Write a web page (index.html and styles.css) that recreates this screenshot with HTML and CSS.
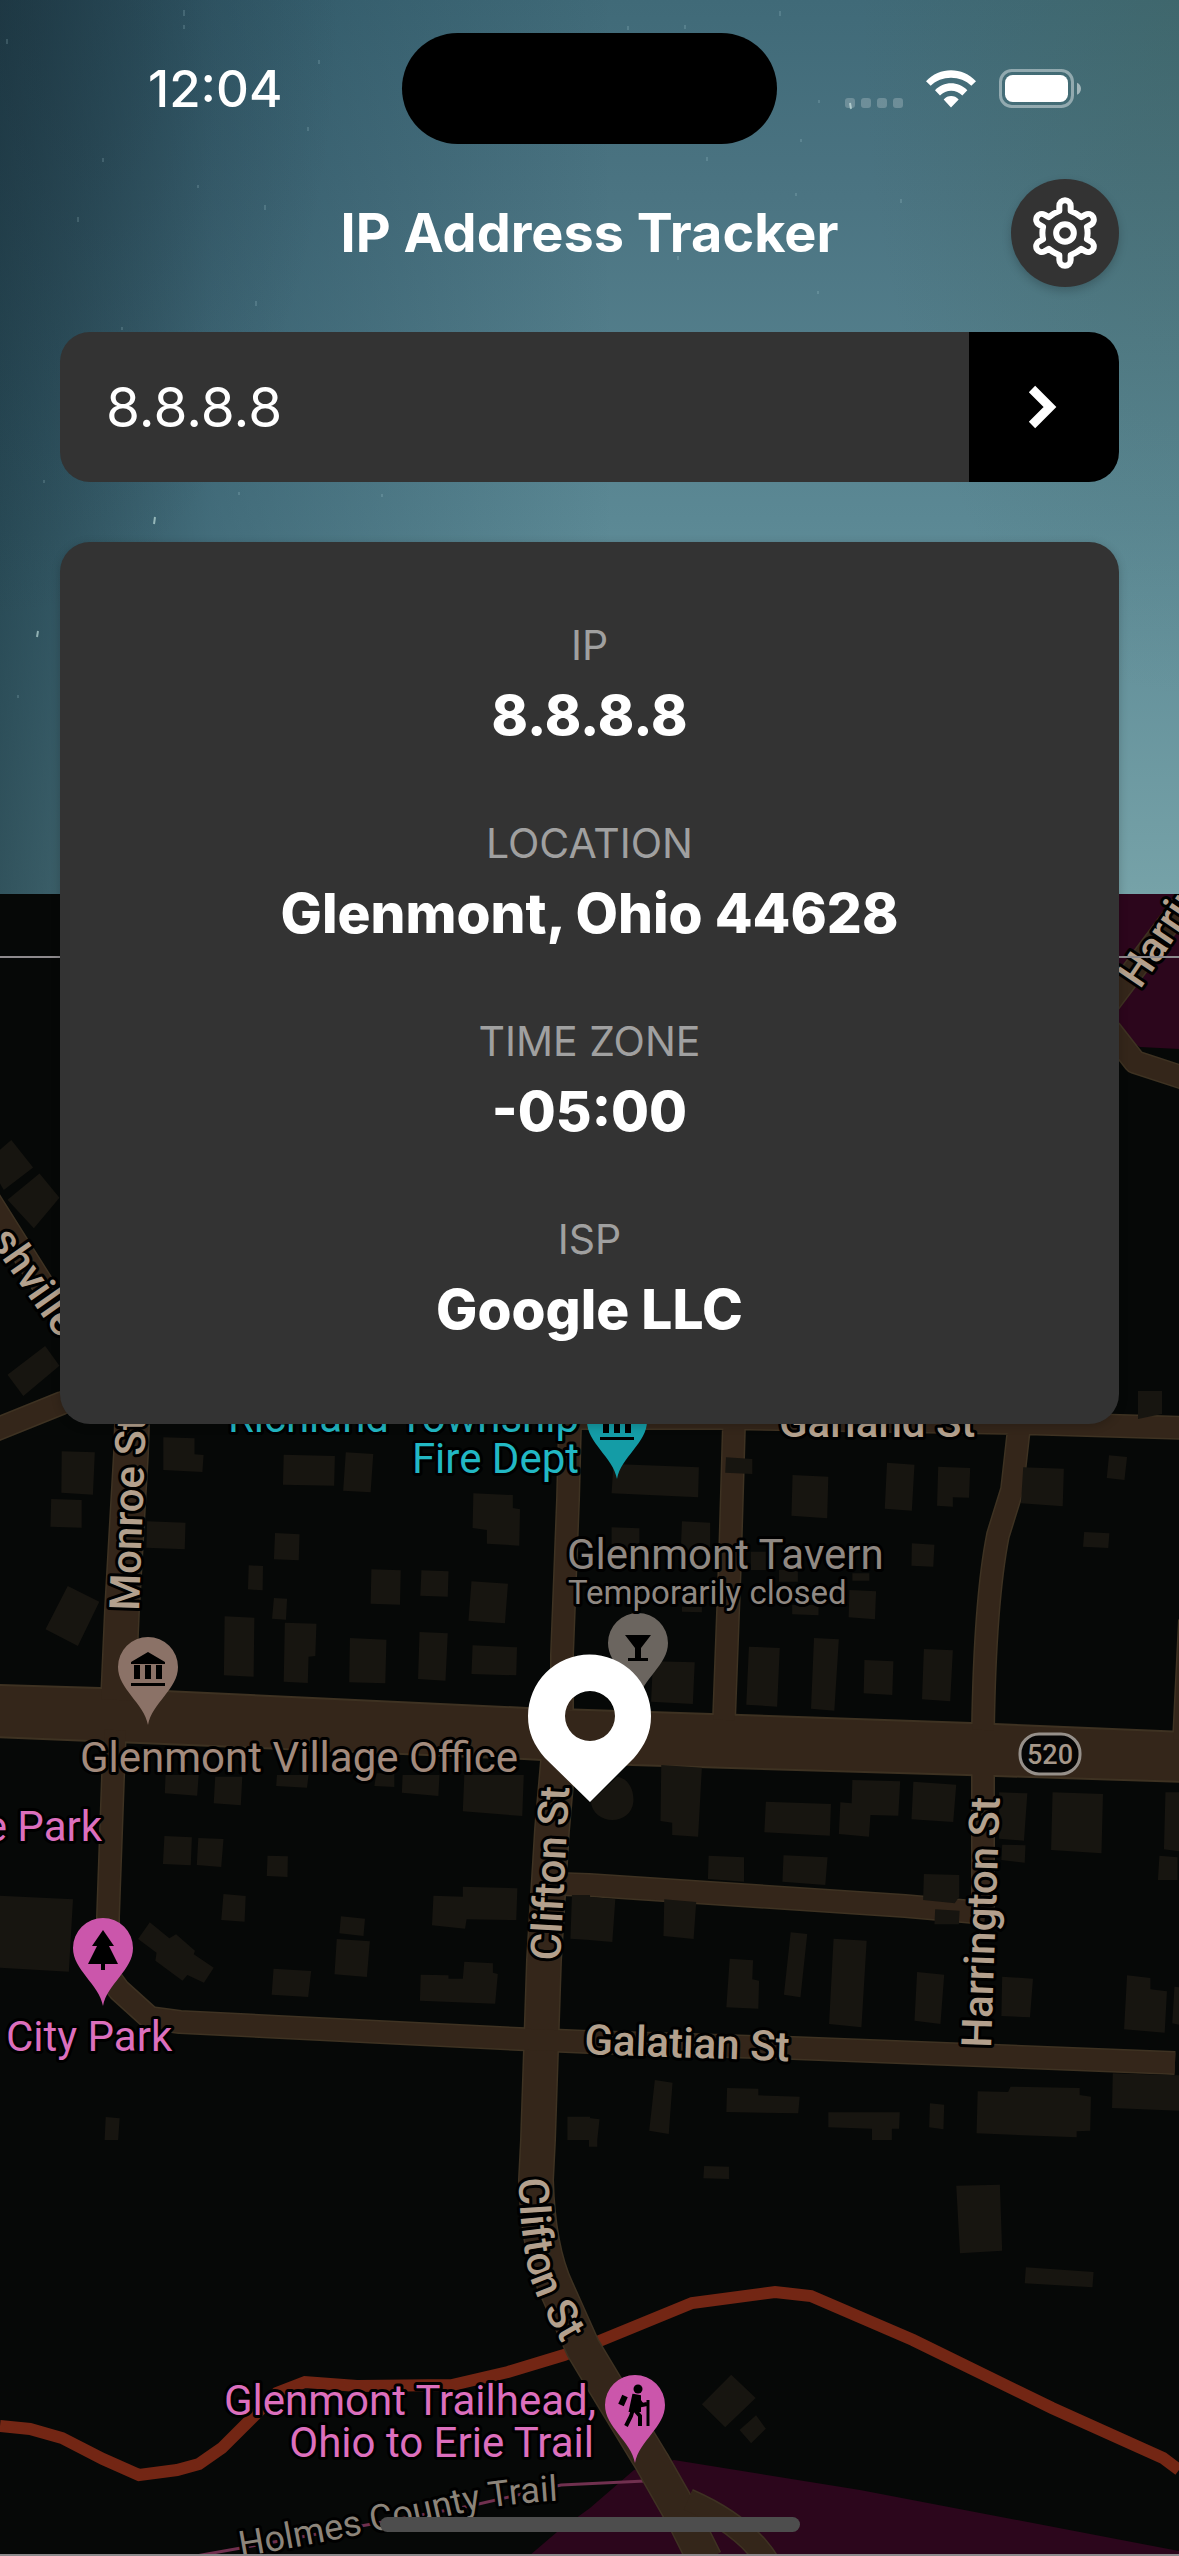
FILE: index.html
```html
<!DOCTYPE html>
<html lang="en">
<head>
<meta charset="utf-8">
<meta name="viewport" content="width=device-width">
<title>IP Address Tracker</title>
<link rel="stylesheet" href="styles.css">
</head>
<body>
<div class="app">
  <header class="sky">
    <svg class="stars" viewBox="0 0 1179 894" preserveAspectRatio="xMidYMin slice" aria-hidden="true">
      <path d="M184 10v6M184 25v4M780 11v5M628 26v4M685 25v4M7 39v5M319 60v4M308 127v4M103 158v4M707 157v4M265 205v5M78 217v5M256 301v5M678 256v4M801 139v3M901 199v4M818 291v3M122 327v3M819 100v3M44 480v3M239 492v3M18 695v3M382 494v3M198 185v3M796 193v3"/>
      <path class="bright" d="M155 517l-1 7M38 631l-1 6M850 103l1 6"/>
    </svg>
    <div class="status">
      <time class="clock">12:04</time>
      <div class="island"></div>
      <div class="indicators">
        <svg width="58" height="10" viewBox="0 0 58 10" class="dots"><rect width="10" height="10" rx="3"/><rect x="16" width="10" height="10" rx="3"/><rect x="32" width="10" height="10" rx="3"/><rect x="48" width="10" height="10" rx="3"/></svg>
        <svg width="50" height="38" viewBox="0 0 150 113" fill="#fff"><path d="M0 33C40-11 110-11 150 33L136 47C105 15 45 15 14 47ZM27 60C53 32 97 32 124 60L109 76C91 57 60 57 42 76ZM53 88C65 74 86 74 98 88L75 112Z"/></svg>
        <svg width="82" height="39" viewBox="0 0 246 117"><rect x="4.5" y="4.5" width="216" height="108" rx="34" fill="none" stroke="#fff" stroke-opacity=".42" stroke-width="9"/><rect x="18" y="18" width="189" height="81" rx="23" fill="#fff"/><path d="M234 41c16 6 16 30 0 36z" fill="#fff" fill-opacity=".5"/></svg>
      </div>
    </div>
    <div class="titlebar">
      <h1>IP Address Tracker</h1>
      <button class="settings" type="button" aria-label="Settings">
        <svg width="72" height="72" viewBox="-108 -108 216 216" fill="none" stroke="#fff" stroke-width="18" stroke-linejoin="round"><path d="M-17-66V-81A17 17 0 0 1 17-81V-66Q34-60 48.7-47.7L61.6-55.2A17 17 0 0 1 78.6-25.8L65.7-18.3Q70 0 65.7 18.3L78.6 25.8A17 17 0 0 1 61.6 55.2L48.7 47.7Q34 60 17 66V81A17 17 0 0 1-17 81V66Q-34 60-48.7 47.7L-61.6 55.2A17 17 0 0 1-78.6 25.8L-65.7 18.3Q-70 0-65.7-18.3L-78.6-25.8A17 17 0 0 1-61.6-55.2L-48.7-47.7Q-34-60-17-66Z"/><circle r="26.500"/></svg>
      </button>
    </div>
    <form class="search">
      <input type="text" value="8.8.8.8" aria-label="IP address">
      <button type="button" aria-label="Search"><svg width="36" height="48" viewBox="0 0 36 48" fill="none" stroke="#fff" stroke-width="9"><path d="M6 6L24 24L6 42"/></svg></button>
    </form>
    <dl class="card">
      <div><dt>IP</dt><dd>8.8.8.8</dd></div>
      <div><dt>LOCATION</dt><dd>Glenmont, Ohio 44628</dd></div>
      <div><dt>TIME ZONE</dt><dd>-05:00</dd></div>
      <div><dt>ISP</dt><dd>Google LLC</dd></div>
    </dl>
  </header>
  <main class="map">
    <svg viewBox="0 894 1179 1662" role="img" aria-label="Map of Glenmont, Ohio">
      <defs>
        <path id="pin" d="M0 0C-4-22-30-36-30-58A30 30 0 0 1 30-58C30-36 4-22 0 0Z"/>
        <path id="hall" d="M-17-63L0-73L17-63V-61H-17ZM-14-60H-8V-46H-14ZM-3-60H3V-46H-3ZM8-60H14V-46H8ZM-17-42H17V-39H-17Z"/>
        <path id="bend" d="M519 2178Q519 2230 530 2277Q540 2310 580 2372"/>
        <path id="trail" d="M241 2557Q360 2536 470 2511Q510 2503 570 2500"/>
      </defs>
      <rect y="894" width="1179" height="1662" fill="#060807"/>
      <g class="park">
        <path d="M1110 894H1179V1049L1140 1047L1110 1028Z"/>
        <path d="M529 2556L557 2532L590 2508L634 2470L674 2460L860 2490L1179 2551V2556Z"/>
      </g>
      <path d="M196 2556L241 2548L470 2506L561 2485L645 2481" fill="none" stroke="#70304f" stroke-width="3"/>
      <path d="M0 2426L30 2429L62 2438L103 2459L139 2475L177 2470L199 2464L222 2448L248 2422L277 2393L305 2382L357 2386L452 2385L508 2372L564 2355L597 2342L692 2303L775 2292L811 2296L913 2340L1052 2408L1163 2458L1179 2470" fill="none" stroke="#732614" stroke-width="12"/>
      <g class="road-edge">
        <path id="wide" d="M132 1424L131 1453L122 1610L118 1700M559 1750L552 1830L544 1960L538 2140L536 2180Q538 2250 557 2290L583 2348L604 2383L652 2462L685 2520L705 2560"/>
      </g>
      <g class="street-edge">
        <path id="narrow" d="M-20 1185L60 1312M-20 1436L62 1403L130 1380M115 1730L113 1777L108 1917V1975L119 1990L150 2018L180 2022L519 2039L589 2042L793 2048L1175 2063M570 1418H720L1019 1423L1190 1428M570 1424L568 1500L562 1655V1710M734 1424L730 1560L724 1720M1019 1428L1012 1490L998 1535Q985 1600 983 1730M983 1770V1915M560 1884L589 1885L905 1906L985 1913M1100 1015L1190 895M1110 1030L1135 1062L1190 1080M1190 1620L1184 1740M688 2500Q745 2525 768 2562"/>
      </g>
      <path class="main-road" d="M-4 1685L100 1688L527 1708L711 1714L971 1723L1183 1732V1782L967 1775L632 1765L524 1759L-4 1737Z"/>
      <use href="#wide" class="road"/><use href="#narrow" class="street"/>
      <g class="buildings">
        <svg y="880" width="590" height="560" viewBox="0 0 1568 1568" preserveAspectRatio="none"><path d="M30 728L88 805L10 868L0 850V755ZM105 822L158 890L90 975L20 895ZM120 1305L158 1360L62 1445L20 1385Z"/></svg>
        <path d="M1138 1391H1162V1414L1138 1419Z"/>
        <svg y="1400" width="590" height="400" viewBox="0 0 1568 1200" preserveAspectRatio="none"><path d="M164 154L252 157L247 284L163 278ZM136 297L217 300V383L134 380ZM434 112L517 115V163L541 165L538 216L434 210ZM754 164L890 168L888 257L752 254ZM919 157L992 162L985 277L912 272ZM391 364L493 368L491 448L389 443ZM731 399L796 403L794 481L728 478ZM661 496L699 498L698 571L659 568ZM728 594L763 596L760 659L723 656ZM597 649L676 653L674 830L595 826ZM757 668L841 671L838 768L820 770L818 849L754 845ZM930 714L1027 719L1024 850L928 847ZM987 508L1065 511L1063 614L985 611ZM1120 511L1192 514L1190 590L1117 587ZM1258 280L1363 285V324L1382 328L1380 437L1294 431V390L1256 384ZM1253 544L1350 551L1342 670L1245 662ZM1115 696L1190 700L1184 842L1111 837ZM1256 736L1374 742L1372 826L1253 822ZM180 558L264 605L207 738L121 688Z"/></svg>
        <svg x="589" y="1400" width="590" height="400" viewBox="0 0 1568 1200" preserveAspectRatio="none"><path d="M65 192L292 202L290 292L60 280ZM364 172L434 177V222L362 218ZM541 225L636 230L633 355L538 347ZM792 188L865 194L858 332L786 326ZM928 200L1013 204L1010 293L967 292V320L925 317ZM1154 202L1262 206L1259 319L1148 310ZM1382 166L1430 171L1423 240L1376 234ZM1316 396L1383 400L1380 444L1313 440ZM858 430L918 434L915 500L857 497ZM60 382L134 385V450H60ZM247 364L322 368V450H244ZM505 510H555V545H505ZM700 520H745V542H700ZM540 615H610V646L540 643ZM692 570L763 574L760 658L690 652ZM425 740L507 744L500 920L418 914ZM598 714L664 718L652 932L590 926ZM732 780L809 784L806 885L730 880ZM890 747L967 751L960 904L885 898ZM170 784L281 787L276 912L165 905ZM430 455H470V510H430ZM247 620H300V637L247 635Z"/></svg>
        <svg y="1740" width="590" height="400" viewBox="0 0 1568 1200" preserveAspectRatio="none"><path d="M440 105H528L524 167L438 160ZM572 110H644L640 196L568 190ZM736 105H820L816 143L734 138ZM1000 100H1048V141L995 138ZM1070 105H1168L1165 168L1068 158ZM1234 105H1392L1388 228L1230 214ZM437 288L510 292L507 376L433 372ZM527 294L594 297L588 381L523 375ZM711 347L765 349L764 411L709 408ZM594 462L653 468L650 545L588 540ZM0 467L194 478L183 695L0 683ZM398 547L450 595L468 583L518 632L515 643L568 683L542 728L498 705L485 722L413 662L416 638L367 597ZM906 529L970 536L966 588L902 580ZM895 597L983 604L975 711L889 703ZM727 686L827 693L819 771L722 764ZM1152 467L1230 470V440L1375 445L1372 540L1240 538L1236 566L1148 556ZM1118 704L1192 706V716H1230L1234 665L1310 670V698L1323 702L1316 791L1116 782ZM1520 465H1568V600L1516 596ZM281 1131L318 1135L314 1200H278ZM1508 1130H1568V1200H1508Z"/></svg>
        <svg x="589" y="1740" width="590" height="400" viewBox="0 0 1568 1200" preserveAspectRatio="none"><path d="M75 110C105 115 120 150 118 185C115 220 90 240 62 240C35 240 8 220 5 185ZM192 75L300 83L290 290L221 285V248L190 243ZM470 185L643 192L640 287L466 277ZM668 187L698 190L700 120L827 124L822 227L748 225L744 290L664 282ZM862 125L976 134L968 246L857 238ZM1090 157L1165 160L1156 302L1090 296ZM1232 157L1366 162L1362 340L1228 330ZM1098 314L1160 316L1158 368L1096 360ZM1532 157H1568V334L1528 328ZM1516 347L1564 352V420H1512ZM318 347L412 352V425L316 417ZM517 346L634 352L628 435L514 425ZM0 470L70 478L62 606L0 600ZM200 478L285 486L278 597L198 588ZM890 402L984 405V470L972 490L888 480ZM920 508L985 512L983 553H918ZM536 577L580 582L562 772L518 764ZM650 596L738 602L724 862L638 852ZM374 656L436 661L434 718L452 722L450 806L365 802ZM872 696L944 704L934 852L865 842ZM1098 710L1180 716L1172 832L1096 828ZM1430 706L1492 714V748L1536 754L1530 878L1422 868ZM1556 740L1568 742V854L1550 850ZM175 1020L222 1028L212 1182L160 1172ZM367 1044L450 1046V1066L560 1070L556 1120L365 1116ZM636 1117H826L824 1166H805V1200H752V1166L636 1162ZM906 1090L944 1094L942 1168L904 1162ZM1033 1054L1114 1056L1120 1040L1304 1044V1065L1334 1070L1332 1172L1296 1174V1192L1030 1180ZM1392 1000L1568 1006V1112L1390 1104ZM0 1134L28 1138L22 1200H0Z"/></svg>
        <svg x="589" y="2140" width="590" height="416" viewBox="0 0 1568 1248" preserveAspectRatio="none"><path d="M0 0H22V20H0ZM306 78L372 80V117L304 115ZM976 137L1092 134L1098 332L986 340ZM1161 382L1341 396L1338 442L1158 430ZM378 704L443 774L362 862L300 793ZM444 826L470 866L431 910L400 870Z"/></svg>
      </g>

      <use href="#pin" x="148" y="1725" fill="#8b7267"/><use href="#hall" x="148" y="1725"/>
      <use href="#pin" x="617" y="1479" fill="#149ca6"/><use href="#hall" x="617" y="1479"/>
      <use href="#pin" x="638" y="1701" fill="#6b655f"/>
      <path d="M625 1635H651L641 1648V1658H648V1661H628V1658H635V1648Z"/>
      <use href="#pin" x="103" y="2006" fill="#cb56ab"/>
      <path d="M103 1930L114 1946H109L118 1964H105V1970H101V1964H88L97 1946H92Z"/>
      <use href="#pin" x="635" y="2463" fill="#cb56ab"/>
      <g fill="none" stroke="#000" stroke-width="4"><circle cx="638" cy="2389" r="4.500" fill="#000" stroke="none"/><path d="M635 2396L634 2409L640 2416V2426M633 2409L631 2416L626 2426M638 2399L642 2405L647 2404"/><path d="M634 2396L639 2397L639 2410H631Z" fill="#000"/><path d="M648 2400V2426" stroke-width="3"/><path d="M625 2396L621 2405" stroke-width="6"/></g>

      <g class="labels">
        <text class="street-name" transform="translate(-11 1240) rotate(55)">shville</text>
        <text class="street-name" transform="translate(1140 990) rotate(-56)">Harrington</text>
        <text class="street-name" transform="translate(139 1611) rotate(-88)">Monroe St</text>
        <text class="street-name" transform="translate(560 1961) rotate(-87)">Clifton St</text>
        <text class="street-name" transform="translate(991 2048) rotate(-88)">Harrington St</text>
        <text class="street-name" transform="translate(584 2054) rotate(2)">Galatian St</text>
        <text class="street-name" x="779" y="1437">Garland St</text>
        <text class="street-name"><textPath href="#bend">Clifton St</textPath></text>
        <text class="trail-name"><textPath href="#trail">Holmes County Trail</textPath></text>
        <text class="teal end" x="579" y="1432">Richland Township</text>
        <text class="teal end" x="579" y="1473">Fire Dept</text>
        <text class="grey" x="567" y="1569">Glenmont Tavern</text>
        <text class="grey small" x="568" y="1604">Temporarily closed</text>
        <text class="office" x="80" y="1772">Glenmont Village Office</text>
        <text class="pink end" x="102" y="1841">e Park</text>
        <text class="pink" x="6" y="2051">City Park</text>
        <text class="pink end" x="596" y="2415">Glenmont Trailhead,</text>
        <text class="pink end" x="594" y="2457">Ohio to Erie Trail</text>
      </g>
      <rect x="1020" y="1734" width="60" height="40" rx="19" fill="#050505" stroke="#96908a" stroke-width="3"/>
      <text class="shield" x="1050" y="1764">520</text>
      <path d="M0 957H1179M0 2555H1179" stroke="#8d8a8d" stroke-width="2"/>
      <path fill="#fff" fill-rule="evenodd" d="M590 1802L545 1758C534 1745 528 1733 528 1716A61 61 0 0 1 651 1716C651 1733 645 1745 634 1758ZM590 1691A25 25 0 0 0 590 1741A25 25 0 0 0 590 1691Z"/>
    </svg>
    <div class="home-bar"></div>
  </main>
</div>
</body>
</html>
```
FILE: styles.css
```css
* { box-sizing: border-box; }
body { margin: 0; background: #060807; color: #fff; font-family: Inter, "Liberation Sans", sans-serif; }
button { border: 0; padding: 0; color: inherit; cursor: pointer; display: grid; place-items: center; }
svg { display: block; }

.app { display: flex; flex-direction: column; min-height: 100vh; }

.sky {
  position: relative;
  z-index: 1;
  margin-bottom: -530px;
}
.sky::before {
  content: "";
  position: absolute;
  inset: 0 0 530px;
  z-index: -2;
  background:
    radial-gradient(ellipse 340px 620px at 0 0, rgba(28, 44, 54, .4), rgba(28, 44, 54, 0)),
    linear-gradient(90deg, rgba(14, 42, 54, .66), rgba(22, 58, 76, .36) 18%, rgba(30, 70, 90, 0) 52%),
    radial-gradient(ellipse 320px 700px at 100% 0, rgba(60, 95, 80, .28), rgba(60, 95, 80, 0)),
    linear-gradient(#406a78, #4b7482 22%, #5b8894 58%, #76a2a8);
}
.stars {
  position: absolute;
  inset: 0 0 530px;
  width: 100%;
  height: calc(100% - 530px);
  z-index: -1;
  fill: none;
  stroke: rgba(190, 225, 230, .35);
  stroke-width: 1;
}
.stars .bright { stroke: rgba(210, 240, 235, .6); stroke-width: 2; }

.status {
  display: grid;
  grid-template-columns: 1fr 375px 1fr;
  align-items: center;
  padding: 33px 98px 35px 98px;
}
.clock { padding-left: 50px; font-size: 51px; line-height: 60px; font-weight: 500; }
.island { height: 111px; border-radius: 56px; background: #000; }
.indicators { display: flex; justify-content: flex-end; align-items: center; gap: 23px; }
.dots { fill: rgba(255, 255, 255, .22); align-self: flex-end; }

.titlebar {
  display: grid;
  grid-template-columns: 108px 1fr 108px;
  align-items: center;
  padding: 0 60px;
}
h1 { grid-column: 2; margin: 0; text-align: center; font-size: 54px; line-height: 60px; font-weight: 700; }
.settings { width: 108px; height: 108px; border-radius: 50%; background: #333; box-shadow: 0 4px 10px rgba(0, 0, 0, .2); }

.search { display: flex; height: 150px; margin: 45px 60px 60px; border-radius: 30px; overflow: hidden; }
.search input {
  flex: 1;
  min-width: 0;
  border: 0;
  outline: 0;
  padding: 0 46px;
  background: #333;
  color: #fff;
  font: 400 55px/60px Inter, "Liberation Sans", sans-serif;
}
.search button { width: 150px; background: #000; }

.card {
  display: flex;
  flex-direction: column;
  gap: 74px;
  margin: 0 60px;
  padding: 79px 40px 85px;
  border-radius: 30px;
  background: #333;
  box-shadow: 0 2px 10px rgba(0, 0, 0, .2);
  text-align: center;
}
dt { margin-bottom: 16px; font-size: 41px; line-height: 48px; font-weight: 400; color: #a0a0a0; }
dd { margin: 0; font-size: 55px; line-height: 60px; font-weight: 800; }

.map { position: relative; }
.map > svg { width: 100%; height: auto; }
.park { fill: #2c061c; }
.main-road { fill: #34261a; stroke: #3e3222; stroke-width: 2; }
.road-edge, .street-edge, .road, .street { fill: none; stroke: #34261a; stroke-linejoin: round; }
.road-edge, .street-edge { stroke: #3e3222; }
.road-edge { stroke-width: 36px; }
.street-edge { stroke-width: 24px; }
.road { stroke-width: 33px; }
.street { stroke-width: 21px; }
.buildings { fill: #171510; }

.labels text {
  font-family: Roboto, "Liberation Sans", sans-serif;
  font-size: 42px;
  stroke: #000;
  stroke-width: 6px;
  stroke-linejoin: round;
  paint-order: stroke;
}
.labels .street-name { fill: #b3a08d; font-weight: 500; }
.labels .trail-name { fill: #8c847a; font-size: 36px; }
.labels .teal { fill: #22b8c4; }
.labels .grey { fill: #8f8882; }
.labels .small { font-size: 33px; }
.labels .office { fill: #a28a7c; }
.labels .pink { fill: #dc6fbd; }
.labels .end { text-anchor: end; }
.shield { font: 500 27px Roboto, "Liberation Sans", sans-serif; text-anchor: middle; fill: #a59789; }

.home-bar {
  position: absolute;
  left: 50%;
  bottom: 24px;
  width: 420px;
  height: 15px;
  margin-left: -210px;
  border-radius: 8px;
  background: #4d4d4d;
}
```
